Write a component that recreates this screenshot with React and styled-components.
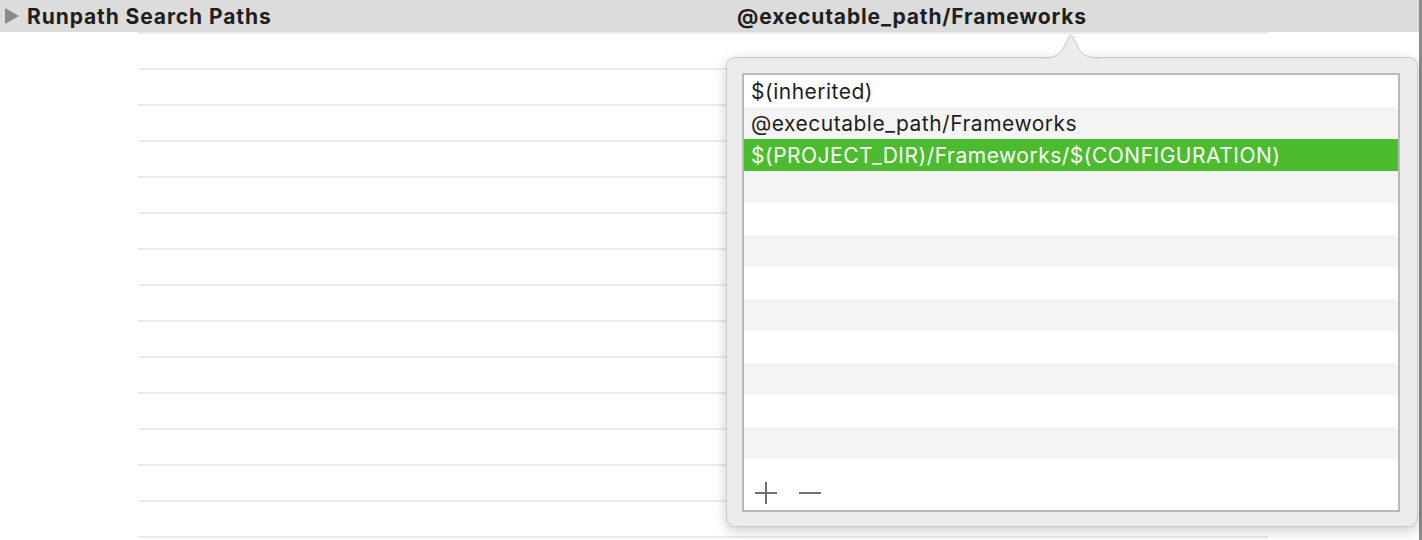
import React from 'react';
import styled, { createGlobalStyle } from 'styled-components';

const Global = createGlobalStyle`
  html, body { margin: 0; padding: 0; background: #fff; }
  body { font-family: Inter, "Liberation Sans", sans-serif; -webkit-font-smoothing: antialiased; }
  * { box-sizing: border-box; }
`;

const Page = styled.div`
  position: relative;
  width: 1422px;
  height: 540px;
  overflow: hidden;
  display: flex;
  background: #fff;
`;

const Main = styled.div`
  flex: 1;
  display: flex;
  flex-direction: column;
`;

const Edge = styled.div`
  width: 3px;
  background: #8c8c8c;
`;

const Header = styled.div`
  height: 32px;
  flex: none;
  background: #dcdcdc;
  display: grid;
  grid-template-columns: 737px 1fr;
  align-items: center;
`;

const TitleCell = styled.div`
  display: flex;
  align-items: center;
  gap: 8px;
  padding-left: 5px;
  font-weight: 700;
  font-size: 21px;
  letter-spacing: 0.9px;
  color: #1e1e1e;
  white-space: nowrap;
`;

const Disclosure = styled.span`
  flex: none;
  width: 0;
  height: 0;
  border-left: 14px solid #8a8a8a;
  border-top: 8px solid transparent;
  border-bottom: 8px solid transparent;
`;

const ValueCell = styled.div`
  font-weight: 700;
  font-size: 21px;
  letter-spacing: 0.85px;
  color: #1e1e1e;
  white-space: nowrap;
`;

const Grid = styled.div`
  margin-left: 138px;
  width: 1130px;
`;

const GridRow = styled.div`
  height: 36px;
  border-top: 2px solid #ececec;
`;

const Popover = styled.div`
  position: absolute;
  left: 726px;
  top: 57px;
  width: 692px;
  height: 470px;
  background: #ececec;
  border: 1px solid #c9c9c9;
  border-radius: 9px;
  box-shadow: 0 4px 14px rgba(0, 0, 0, 0.2);
  padding: 15px 17px 14px 15px;
  display: flex;
`;

const Arrow = styled.svg`
  position: absolute;
  left: 314px;
  top: -25px;
  width: 60px;
  height: 27px;
  overflow: visible;
`;

const Table = styled.div`
  flex: 1;
  display: flex;
  flex-direction: column;
  background: #fff;
  border: 2px solid #b9b9b9;
`;

const Row = styled.div`
  height: 32px;
  flex: none;
  padding-left: 7px;
  line-height: 34px;
  font-size: 21px;
  letter-spacing: 0.5px;
  overflow: hidden;
  color: ${p => (p.$selected ? '#fff' : '#1e1e1e')};
  background: ${p => (p.$selected ? '#4cbc2e' : p.$stripe ? '#f4f4f4' : '#fff')};
  white-space: nowrap;
`;

const Footer = styled.div`
  flex: 1;
  display: flex;
  align-items: flex-end;
  gap: 22px;
  padding: 0 0 6px 11px;
`;

const IconButton = styled.svg`
  width: 22px;
  height: 22px;
  display: block;
`;

const values = [
  '$(inherited)',
  '@executable_path/Frameworks',
  '$(PROJECT_DIR)/Frameworks/$(CONFIGURATION)',
];

export default function App() {
  const rows = Array.from({ length: 12 }, (_, i) => i);
  return (
    <>
      <Global />
      <Page>
        <Main>
          <Header>
            <TitleCell>
              <Disclosure />
              Runpath Search Paths
            </TitleCell>
            <ValueCell>@executable_path/Frameworks</ValueCell>
          </Header>
          <Grid>
            {Array.from({ length: 15 }, (_, i) => (
              <GridRow key={i} />
            ))}
          </Grid>
        </Main>
        <Edge />
        <Popover>
          <Arrow viewBox="0 0 60 27">
            <path
              d="M0 25 C 13 25, 17 23, 22 16 L 28 4 Q 30 0.5 32 4 L 38 16 C 43 23, 47 25, 60 25 L 60 27 L 0 27 Z"
              fill="#ececec"
            />
            <path
              d="M0 25 C 13 25, 17 23, 22 16 L 28 4 Q 30 0.5 32 4 L 38 16 C 43 23, 47 25, 60 25"
              fill="none"
              stroke="#c4c4c4"
              strokeWidth="1"
            />
          </Arrow>
          <Table>
            {rows.map(i => (
              <Row key={i} $stripe={i % 2 === 1} $selected={i === 2}>
                {values[i] || ''}
              </Row>
            ))}
            <Footer>
              <IconButton viewBox="0 0 22 22">
                <path d="M0 11 H22 M11 0 V22" stroke="#707070" strokeWidth="2" />
              </IconButton>
              <IconButton viewBox="0 0 22 22">
                <path d="M0 11 H22" stroke="#707070" strokeWidth="2" />
              </IconButton>
            </Footer>
          </Table>
        </Popover>
      </Page>
    </>
  );
}
